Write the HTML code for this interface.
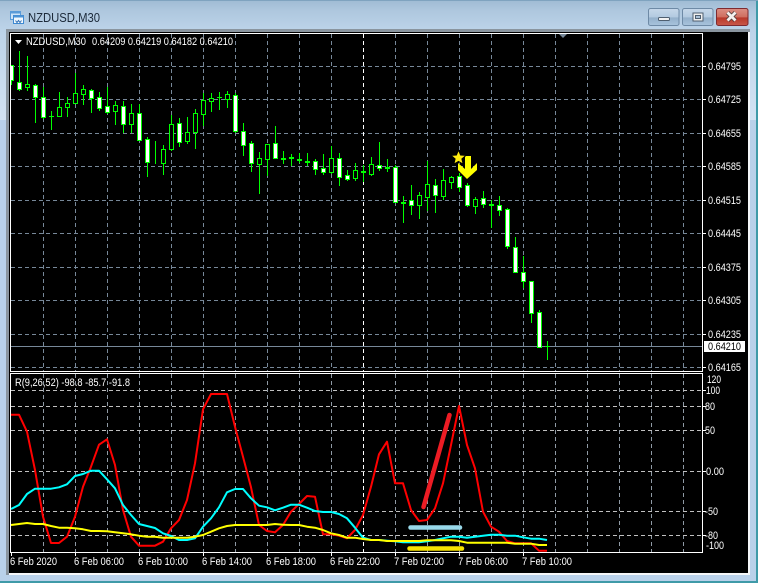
<!DOCTYPE html>
<html><head><meta charset="utf-8"><title>NZDUSD,M30</title>
<style>
html,body{margin:0;padding:0;background:#b9d1ea;width:758px;height:583px;overflow:hidden}
svg{position:absolute;left:0;top:0;display:block}
text{font-family:"Liberation Sans",Arial,sans-serif;font-size:11px;fill:#fff}
</style></head><body>
<svg width="758" height="583" viewBox="0 0 758 583" xmlns="http://www.w3.org/2000/svg" lengthAdjust="spacingAndGlyphs">
<defs>
<linearGradient id="tb" x1="0" y1="0" x2="0" y2="1"><stop offset="0" stop-color="#9fbbd3"/><stop offset=".35" stop-color="#aec7de"/><stop offset="1" stop-color="#bcd3e9"/></linearGradient>
<linearGradient id="side" x1="0" y1="0" x2="0" y2="1"><stop offset="0" stop-color="#bcd3e9"/><stop offset="1" stop-color="#d3e3f3"/></linearGradient>
<linearGradient id="btn" x1="0" y1="0" x2="0" y2="1"><stop offset="0" stop-color="#c6d8ea"/><stop offset=".5" stop-color="#b3cae0"/><stop offset=".55" stop-color="#94b0cb"/><stop offset="1" stop-color="#a9c4dd"/></linearGradient>
<linearGradient id="cls" x1="0" y1="0" x2="0" y2="1"><stop offset="0" stop-color="#dc8f84"/><stop offset=".5" stop-color="#cf6e60"/><stop offset=".55" stop-color="#b8382a"/><stop offset="1" stop-color="#c8594a"/></linearGradient>
<clipPath id="mc"><rect x="11" y="34" width="691" height="337"/></clipPath>
</defs>
<rect width="758" height="583" fill="#b9d1ea"/>
<rect width="758" height="30" fill="url(#tb)"/>
<rect x="0" y="30" width="6" height="90" fill="url(#side)"/>
<rect x="750" y="30" width="6" height="90" fill="url(#side)"/>
<rect x="0" y="581" width="758" height="2" fill="#3f9aa8"/>
<rect x="756" y="0" width="2" height="583" fill="#3f9aa8"/>
<rect x="0" y="0" width="758" height="1" fill="#7fa3bf"/>
<g>
<rect x="10.5" y="11.5" width="10" height="8" fill="#cfe4f7" stroke="#5a9bd8"/>
<rect x="10.5" y="11.5" width="10" height="2" fill="#5a9bd8"/>
<rect x="13.5" y="15.5" width="10" height="8" fill="#f2f8fd" stroke="#3f8ad2"/>
<rect x="13.5" y="15.5" width="10" height="2" fill="#4b93d6"/>
<path d="M15.5 20.5l1.5 2 1.5-2 1.5 2 1.5-2" fill="none" stroke="#2f6fb5"/>
</g>
<text x="28" y="22" style="font-size:13px;fill:#1c2a3a" textLength="72" lengthAdjust="spacingAndGlyphs">NZDUSD,M30</text>
<rect x="648.5" y="8.5" width="30.5" height="17" rx="2" fill="url(#btn)" stroke="#6e8aa6"/>
<rect x="658.5" y="17.5" width="11" height="3" rx="1" fill="#f2f2f2" stroke="#4f5f70"/>
<rect x="682.5" y="8.5" width="30.5" height="17" rx="2" fill="url(#btn)" stroke="#6e8aa6"/>
<rect x="693" y="13" width="10" height="8" fill="#f0f0f0" stroke="#4f5f70"/>
<rect x="695.5" y="15.5" width="5" height="3" fill="#a9c0d6" stroke="#4f5f70"/>
<rect x="716.5" y="8.5" width="31.5" height="17" rx="2" fill="url(#cls)" stroke="#7e2a30"/>
<path d="M727.5 12.5l8 8M735.5 12.5l-8 8" stroke="#4a3a3a" stroke-width="4.4" fill="none"/>
<path d="M727.5 12.5l8 8M735.5 12.5l-8 8" stroke="#f4f0ee" stroke-width="2.8" fill="none"/>
<rect x="6" y="29" width="744" height="546" fill="#f4f6f8"/>
<rect x="6" y="29" width="744" height="3" fill="#8a959f"/>
<rect x="6" y="29" width="3" height="546" fill="#8a959f"/>
<rect x="9" y="32" width="739" height="541" fill="#000"/>
<g fill="none" stroke="#778899" stroke-width="1" stroke-dasharray="4 3" shape-rendering="crispEdges">
<path d="M11 66.5H702M11 99.5H702M11 133.5H702M11 166.5H702M11 200.5H702M11 233.5H702M11 267.5H702M11 300.5H702M11 334.5H702M11 367.5H702"/>
<path d="M43.5 34V371M75.5 34V371M107.5 34V371M139.5 34V371M171.5 34V371M203.5 34V371M235.5 34V371M267.5 34V371M299.5 34V371M331.5 34V371M395.5 34V371M427.5 34V371M459.5 34V371M491.5 34V371M523.5 34V371M555.5 34V371M587.5 34V371M619.5 34V371M651.5 34V371M683.5 34V371"/>
<path d="M43.5 374V552M75.5 374V552M107.5 374V552M139.5 374V552M171.5 374V552M203.5 374V552M235.5 374V552M267.5 374V552M299.5 374V552M331.5 374V552M395.5 374V552M427.5 374V552M459.5 374V552M491.5 374V552M523.5 374V552M555.5 374V552M587.5 374V552M619.5 374V552M651.5 374V552M683.5 374V552" stroke="#8f9aa5"/>
<path d="M11 390.5H702M11 406.5H702M11 430.5H702M11 471.5H702M11 511.5H702M11 535.5H702" stroke="#c0c0c0"/>
<path d="M363.5 34V371M363.5 374V552" stroke="#fff"/>
</g>
<path d="M11 346.5H702" stroke="#778899" fill="none"/>
<path d="M558 33h10l-5 5z" fill="#778899"/>
<g clip-path="url(#mc)" shape-rendering="crispEdges">
<path fill="none" stroke="#0f0" d="M11.5 65V85M19.5 51V91M27.5 56V91M35.5 84V123M43.5 87V119M51.5 111V130M59.5 92V117M67.5 97V117M75.5 73V103M83.5 85V105M91.5 89V113M99.5 92V111M107.5 87V114M115.5 101V125M123.5 101V133M131.5 104V133M139.5 104V140M147.5 137V177M155.5 141V164M163.5 145V175M171.5 115V151M179.5 118V147M187.5 117V144M195.5 109V149M203.5 93V126M211.5 93V112M219.5 92V110M227.5 91V108M235.5 93V133M243.5 123V156M251.5 141V172M259.5 152V194M267.5 144V176M275.5 126V159M283.5 151V164M291.5 154V166M299.5 153V163M307.5 153V166M315.5 159V175M323.5 154V175M331.5 146V174M339.5 153V186M347.5 170V181M355.5 163V181M363.5 165V182M371.5 157V176M379.5 142V171M387.5 159V172M395.5 165V202M403.5 196V223M411.5 185V215M419.5 192V219M427.5 161V211M435.5 179V213M443.5 169V200M451.5 176V189M459.5 173V192M467.5 183V207M475.5 197V214M483.5 191V208M491.5 200V228M499.5 196V216M507.5 208V249M515.5 237V273M523.5 256V288M531.5 281V323M539.5 310V348M547.5 341V360"/>
<path fill="#000" stroke="#0f0" d="M25.5 84.5h4v3h-4zM57.5 107.5h4v9h-4zM65.5 103.5h4v4h-4zM73.5 93.5h4v10h-4zM81.5 89.5h4v5h-4zM113.5 105.5h4v6h-4zM129.5 113.5h4v11h-4zM161.5 149.5h4v14h-4zM169.5 124.5h4v25h-4zM185.5 132.5h4v9h-4zM193.5 113.5h4v19h-4zM201.5 100.5h4v14h-4zM209.5 98.5h4v3h-4zM225.5 94.5h4v5h-4zM257.5 158.5h4v6h-4zM265.5 144.5h4v15h-4zM329.5 158.5h4v14h-4zM353.5 170.5h4v8h-4zM369.5 164.5h4v10h-4zM417.5 195.5h4v10h-4zM425.5 184.5h4v13h-4zM441.5 180.5h4v16h-4zM449.5 177.5h4v5h-4zM473.5 199.5h4v7h-4z"/>
<path fill="#fff" stroke="#0f0" d="M9.5 65.5h4v15h-4zM17.5 82.5h4v7h-4zM33.5 85.5h4v12h-4zM41.5 97.5h4v20h-4zM89.5 90.5h4v8h-4zM97.5 97.5h4v11h-4zM105.5 106.5h4v6h-4zM121.5 106.5h4v18h-4zM137.5 113.5h4v27h-4zM145.5 139.5h4v23h-4zM177.5 123.5h4v19h-4zM233.5 95.5h4v36h-4zM241.5 131.5h4v14h-4zM249.5 143.5h4v20h-4zM273.5 143.5h4v15h-4zM313.5 161.5h4v8h-4zM321.5 168.5h4v4h-4zM337.5 158.5h4v19h-4zM345.5 175.5h4v4h-4zM377.5 165.5h4v3h-4zM393.5 167.5h4v35h-4zM409.5 200.5h4v5h-4zM433.5 185.5h4v10h-4zM457.5 176.5h4v11h-4zM465.5 185.5h4v20h-4zM481.5 198.5h4v6h-4zM497.5 205.5h4v5h-4zM505.5 209.5h4v37h-4zM513.5 247.5h4v25h-4zM521.5 272.5h4v9h-4zM529.5 281.5h4v32h-4zM537.5 312.5h4v35h-4z"/>
<path fill="#0f0" d="M49 116h5v1h-5zM217 97h5v1h-5zM281 158h5v2h-5zM289 157h5v2h-5zM297 159h5v2h-5zM305 161h5v2h-5zM361 171h5v2h-5zM385 167h5v2h-5zM401 202h5v2h-5zM489 204h5v2h-5zM545 346h5v1h-5z"/>
</g>
<path d="M465 156h6v13l6-6v7l-10 9-9-9v-7l7 6z" fill="#ffff00"/>
<path d="M458.5 150l2.1 5 5.400.4-4.100 3.500 1.300 5.300-4.700-2.800-4.700 2.800 1.300-5.300-4.100-3.500 5.400-.4z" fill="#ffeb10" stroke="#000" stroke-width="1"/>
<g fill="none" stroke-width="2" stroke-linejoin="round">
<polyline stroke="#f00" points="11,414.7 19,414.7 27,431.7 35,470 43,516.7 51,543 59,543 67,536.7 75,516.7 83,486.7 91,466.7 99,444.7 107,439.3 115,465 123,510 131,536.7 139,545.7 147,545.7 155,545.7 163,541.7 171,528.3 179,520 187,500 195,463.3 203,409.3 211,394 219,394 227,394 235,426.7 243,456.7 251,487.3 259,525 267,531 275,532.3 283,525 291,511.7 299,504 307,496 315,496.7 323,534.3 331,534.3 339,535.7 347,538.3 355,530 363,515 371,486.7 379,454.3 387,441.7 395,483.3 403,483.3 411,510 419,521 427,520 435,508.3 443,483.3 451,445 459,406 467,445 475,468.3 483,511.7 491,526.7 499,531.7 507,541 515,543.3 523,543.3 531,543.3 539,550.7 547,550.7"/>
<polyline stroke="#0ff" points="11,509 19,505 27,494 35,488.7 43,488.7 51,488.7 59,487.3 67,484.3 75,476 83,474 91,470.7 99,470.7 107,479.3 115,488.3 123,505 131,515 139,524 147,526 155,528 163,533.3 171,536 179,540 187,540 195,538.3 203,526.7 211,518.3 219,507.3 227,492.3 235,489 243,489 251,498.3 259,505.7 267,507.3 275,510.3 283,507.7 291,504.7 299,504.7 307,507.7 315,511 323,512 331,512 339,514 347,518.3 355,527.7 363,537.7 371,540 379,540 387,540.7 395,541.3 403,542.3 411,542.3 419,542.3 427,541.3 435,540 443,538.3 451,536.7 459,536.7 467,537.7 475,536.7 483,535.7 491,534.7 499,534.7 507,535.7 515,535.7 523,537.3 531,538.7 539,538.7 547,540"/>
<polyline stroke="#ff0" points="11,525 19,524 27,523 35,524 43,524 51,526 59,527.7 67,527.7 75,528.3 83,529.3 91,531 99,531 107,531.3 115,532.3 123,533.3 131,534.3 139,535.7 147,536.7 155,536.7 163,537.7 171,537.7 179,537.7 187,537.7 195,536.7 203,535 211,531.7 219,528.3 227,526 235,525 243,525 251,525 259,525 267,525 275,524 283,524.7 291,525 299,525 307,526.7 315,527.7 323,530 331,533.3 339,535 347,537.7 355,537.7 363,539 371,540 379,540 387,541 395,541 403,541 411,541 419,541 427,540.3 435,540.3 443,540.3 451,540.3 459,541 467,542.7 475,542.7 483,542.7 491,542.7 499,542.7 507,542.7 515,543.7 523,543.7 531,543.7 539,545 547,545"/>
</g>
<path d="M423.5 507L449.5 415" stroke="#ed1c24" stroke-width="4.5" stroke-linecap="round" fill="none"/>
<path d="M410.5 527.5H460" stroke="#99d9ea" stroke-width="4.5" stroke-linecap="round" fill="none"/>
<path d="M409.5 548.5H462" stroke="#f7e300" stroke-width="4.5" stroke-linecap="round" fill="none"/>
<g fill="none" stroke="#fff" shape-rendering="crispEdges">
<path d="M10.5 33.5H702.5V371.5H10.5z"/>
<path d="M10.5 373.5H702.5V552.5H10.5z"/>
<path d="M703 66.5h3M703 99.5h3M703 133.5h3M703 166.5h3M703 200.5h3M703 233.5h3M703 267.5h3M703 300.5h3M703 334.5h3M703 367.5h3M703 390.5h3M703 406.5h3M703 430.5h3M703 471.5h3M703 511.5h3M703 535.5h3"/>
<path d="M11.5 553v3M75.5 553v3M139.5 553v3M203.5 553v3M267.5 553v3M331.5 553v3M395.5 553v3M459.5 553v3M523.5 553v3"/>
</g>
<path d="M15 40h7l-3.500 4z" fill="#fff"/>
<text x="26" y="45" textLength="60" lengthAdjust="spacingAndGlyphs">NZDUSD,M30</text>
<text x="92" y="45" textLength="141" lengthAdjust="spacingAndGlyphs">0.64209 0.64219 0.64182 0.64210</text>
<text x="15" y="386" textLength="115" lengthAdjust="spacingAndGlyphs">R(9,26,52) -98.8 -85.7 -91.8</text>
<text x="708" y="70" textLength="33" lengthAdjust="spacingAndGlyphs">0.64795</text>
<text x="708" y="103" textLength="33" lengthAdjust="spacingAndGlyphs">0.64725</text>
<text x="708" y="137" textLength="33" lengthAdjust="spacingAndGlyphs">0.64655</text>
<text x="708" y="170" textLength="33" lengthAdjust="spacingAndGlyphs">0.64585</text>
<text x="708" y="204" textLength="33" lengthAdjust="spacingAndGlyphs">0.64515</text>
<text x="708" y="237" textLength="33" lengthAdjust="spacingAndGlyphs">0.64445</text>
<text x="708" y="271" textLength="33" lengthAdjust="spacingAndGlyphs">0.64375</text>
<text x="708" y="304" textLength="33" lengthAdjust="spacingAndGlyphs">0.64305</text>
<text x="708" y="338" textLength="33" lengthAdjust="spacingAndGlyphs">0.64235</text>
<text x="708" y="371" textLength="33" lengthAdjust="spacingAndGlyphs">0.64165</text>
<rect x="704" y="341" width="41" height="11" fill="#fff"/>
<text x="708" y="350" textLength="33" lengthAdjust="spacingAndGlyphs" style="fill:#000">0.64210</text>
<text x="707" y="383" textLength="14" lengthAdjust="spacingAndGlyphs">120</text>
<text x="706" y="394" textLength="14" lengthAdjust="spacingAndGlyphs">100</text>
<text x="705" y="410" textLength="10" lengthAdjust="spacingAndGlyphs">80</text>
<text x="705" y="434" textLength="10" lengthAdjust="spacingAndGlyphs">50</text>
<text x="706" y="475" textLength="18" lengthAdjust="spacingAndGlyphs">0.00</text>
<text x="705" y="515" textLength="13" lengthAdjust="spacingAndGlyphs">-50</text>
<text x="705" y="539" textLength="13" lengthAdjust="spacingAndGlyphs">-80</text>
<text x="706" y="549" textLength="18" lengthAdjust="spacingAndGlyphs">-100</text>
<text x="10" y="565" textLength="47" lengthAdjust="spacingAndGlyphs">6 Feb 2020</text>
<text x="74" y="565" textLength="50" lengthAdjust="spacingAndGlyphs">6 Feb 06:00</text>
<text x="138" y="565" textLength="50" lengthAdjust="spacingAndGlyphs">6 Feb 10:00</text>
<text x="202" y="565" textLength="50" lengthAdjust="spacingAndGlyphs">6 Feb 14:00</text>
<text x="266" y="565" textLength="50" lengthAdjust="spacingAndGlyphs">6 Feb 18:00</text>
<text x="330" y="565" textLength="50" lengthAdjust="spacingAndGlyphs">6 Feb 22:00</text>
<text x="394" y="565" textLength="50" lengthAdjust="spacingAndGlyphs">7 Feb 02:00</text>
<text x="458" y="565" textLength="50" lengthAdjust="spacingAndGlyphs">7 Feb 06:00</text>
<text x="522" y="565" textLength="50" lengthAdjust="spacingAndGlyphs">7 Feb 10:00</text>
</svg>
</body></html>
